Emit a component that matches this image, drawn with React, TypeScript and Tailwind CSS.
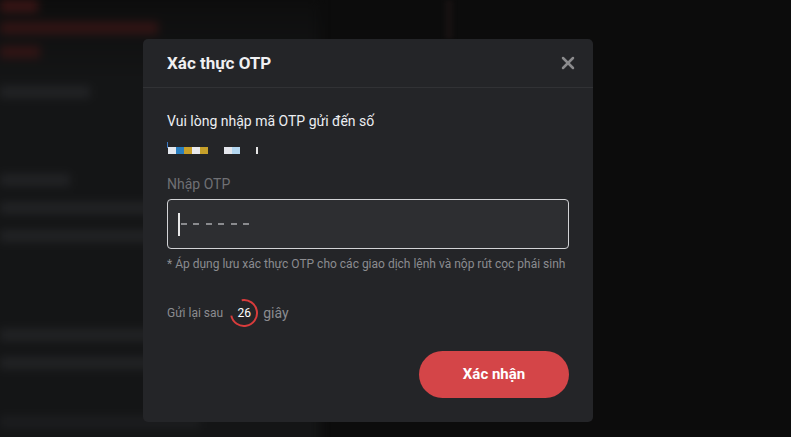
import { X } from "lucide-react";

const bgLines = [
  { w: "w-[38px]", c: "bg-[#3a1515]", mt: "mt-[0px]" },
  { w: "w-[158px]", c: "bg-[#321414]", mt: "mt-[10px]" },
  { w: "w-[40px]", c: "bg-[#321414]", mt: "mt-[12px]" },
  { w: "w-[90px]", c: "bg-[#222325]", mt: "mt-[28px]" },
  { w: "w-[70px]", c: "bg-[#222325]", mt: "mt-[76px]" },
  { w: "w-[200px]", c: "bg-[#222325]", mt: "mt-[16px]" },
  { w: "w-[200px]", c: "bg-[#222325]", mt: "mt-[16px]" },
  { w: "w-[200px]", c: "bg-[#222325]", mt: "mt-[87px]" },
  { w: "w-[200px]", c: "bg-[#222325]", mt: "mt-[16px]" },
  { w: "w-[200px]", c: "bg-[#1c1d1f]", mt: "mt-[47px]" },
];

function Countdown({ value }: { value: number }) {
  const r = 13;
  const c = 2 * Math.PI * r;
  return (
    <div className="relative w-[30px] h-[30px] flex items-center justify-center">
      <svg width="30" height="30" viewBox="0 0 30 30" className="absolute inset-0">
        <circle
          cx="15"
          cy="15"
          r={r}
          fill="none"
          stroke="#d83c3c"
          strokeWidth="2"
          strokeDasharray={`${c * 0.74} ${c}`}
          transform="rotate(-100 15 15)"
        />
      </svg>
      <span className="relative text-[12px] font-normal text-white">{value}</span>
    </div>
  );
}

export default function App() {
  return (
    <div
      className="relative w-[791px] h-[437px] overflow-hidden bg-[#0c0c0c]"
      style={{ fontFamily: "Roboto, 'Noto Sans', sans-serif" }}
    >
      {/* blurred page behind */}
      <div className="absolute top-0 bottom-[-20px] left-[-20px] w-[340px] bg-linear-to-b from-[#0d0d0d] to-[#141516] to-[18%] blur-[5px] flex flex-col pl-[20px]">
        {bgLines.map((l, i) => (
          <div key={i} className={`h-[12px] ${l.w} ${l.c} ${l.mt}`} />
        ))}
      </div>
      <div className="absolute top-0 left-[445px] w-[8px] h-[39px] bg-[#161111] blur-[2px]" />

      {/* modal */}
      <div className="relative pl-[143px] pt-[39px]">
        <div className="w-[450px] h-[383px] bg-[#242528] rounded-[5px] flex flex-col">
          <div className="h-[49px] pl-6 pr-[15px] flex items-center justify-between border-b border-[#313235]">
            <h2 className="text-[17px] font-bold text-[#f0f0f2] pt-[1px]">Xác thực OTP</h2>
            <X size={20} strokeWidth={3} className="text-[#8b8b8d]" />
          </div>

          <div className="flex-1 px-6 pt-[23px] pb-6 flex flex-col">
            <p className="text-[14px] leading-5 text-[#eceef2]">Vui lòng nhập mã OTP gửi đến số</p>

            <div className="mt-[10px] h-[14px] relative flex items-end pb-[1px]">
              <div className="absolute left-0 top-[1px] w-[1px] h-[6px] bg-[#3a78c2]" />
              <div className="flex h-[7px] ml-[1px]">
                <div className="w-[8px] bg-[#e3e7ee]" />
                <div className="w-[8px] bg-[#2a7fc0]" />
                <div className="w-[8px] bg-[#c8a02a]" />
                <div className="w-[8px] bg-[#e8e9ee]" />
                <div className="w-[8px] bg-[#c6a02b]" />
              </div>
              <div className="flex h-[7px] ml-[16px]">
                <div className="w-[8px] bg-[#e4e6ec]" />
                <div className="w-[8px] bg-[#b4d7f0]" />
              </div>
              <div className="w-[2px] h-[7px] bg-[#e6e6e6] ml-[16px]" />
            </div>

            <label className="mt-[19px] text-[14px] leading-5 text-[#6f7074]">Nhập OTP</label>

            <div className="mt-[5px] h-[50px] rounded-[4px] border-[1.5px] border-[#d2d3d6] bg-[#2d2e31] flex items-center pl-[10px]">
              <div className="w-[1.5px] h-[23px] bg-[#e8e8e8]" />
              <div className="flex gap-[6.5px] ml-[1px]">
                {[0, 1, 2, 3, 4, 5].map((i) => (
                  <div key={i} className="w-[6px] h-[2px] bg-[#8a8b8e]" />
                ))}
              </div>
            </div>

            <p className="mt-[7px] text-[12px] leading-4 text-[#8b8c90]">
              * Áp dụng lưu xác thực OTP cho các giao dịch lệnh và nộp rút cọc phái sinh
            </p>

            <div className="mt-[26px] flex items-center">
              <span className="text-[12px] text-[#8b8c90]">Gửi lại sau</span>
              <div className="ml-[6px]">
                <Countdown value={26} />
              </div>
              <span className="ml-[4px] text-[14px] text-[#8b8c90]">giây</span>
            </div>

            <div className="mt-auto flex justify-end">
              <button className="w-[150px] h-[47px] rounded-full bg-[#d44548] text-white text-[15px] font-bold">
                Xác nhận
              </button>
            </div>
          </div>
        </div>
      </div>
    </div>
  );
}
